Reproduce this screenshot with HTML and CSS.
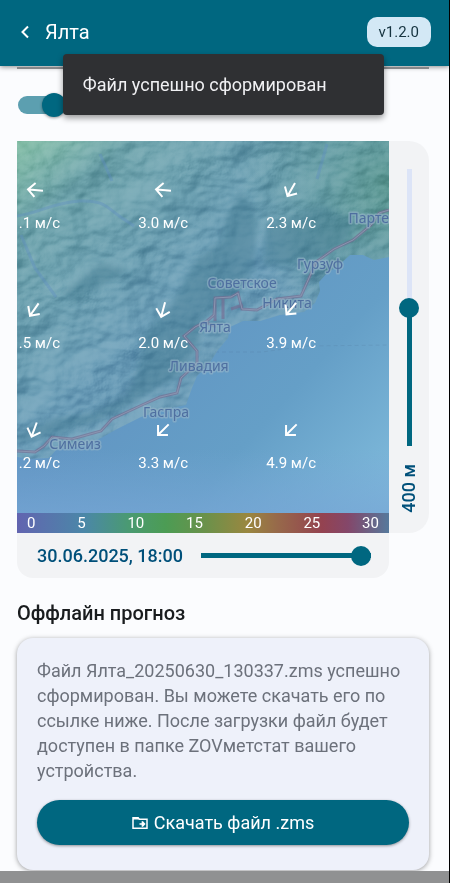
FILE: index.html
```html
<!DOCTYPE html>
<html lang="ru">
<head>
<meta charset="utf-8">
<meta name="viewport" content="width=device-width, initial-scale=1">
<title>Ялта</title>
<link rel="stylesheet" href="styles.css">
</head>
<body>
<header class="topbar">
  <button class="back" type="button" aria-label="Назад">
    <svg width="10" height="14" viewBox="0 0 10 14" fill="none" stroke="currentColor" stroke-width="2"><path d="M8 1.500L2.500 7L8 12.500"/></svg>
  </button>
  <h1 class="title">Ялта</h1>
  <span class="version">v1.2.0</span>
</header>
<div class="toast" role="status">Файл успешно сформирован</div>

<main class="content">
  <hr class="divider">
  <div class="option"><input class="switch" type="checkbox" role="switch" aria-label="Ветер" checked></div>

  <section class="forecast" aria-label="Карта ветра">
    <div class="map">
      <svg class="canvas" viewBox="0 0 372 372" preserveAspectRatio="xMidYMid slice">
        <defs>
          <linearGradient id="land" x1="0" y1="0" x2=".8" y2="1">
            <stop offset="0" stop-color="#84bea6"/><stop offset=".15" stop-color="#6fa4ac"/><stop offset=".5" stop-color="#6b9db8"/><stop offset="1" stop-color="#6897b2"/>
          </linearGradient>
          <radialGradient id="corner" cx="1" cy=".12" r=".4">
            <stop offset="0" stop-color="#5c9a8c" stop-opacity=".8"/><stop offset="1" stop-color="#5c9a8c" stop-opacity="0"/>
          </radialGradient>
          <linearGradient id="sea" gradientUnits="userSpaceOnUse" x1="130" y1="200" x2="340" y2="390">
            <stop offset="0" stop-color="#6296c3"/><stop offset=".5" stop-color="#659fc7"/><stop offset="1" stop-color="#7fbadb"/>
          </linearGradient>
          <linearGradient id="shallow" x1="0" y1="0" x2="0" y2="1">
            <stop offset=".75" stop-color="#76a5d5" stop-opacity="0"/><stop offset="1" stop-color="#76a5d5" stop-opacity=".7"/>
          </linearGradient>
          <filter id="relief" x="0" y="0" width="100%" height="100%" color-interpolation-filters="sRGB">
            <feTurbulence type="fractalNoise" baseFrequency=".016 .022" numOctaves="4" seed="12" result="n"/>
            <feColorMatrix in="n" type="matrix" values="0 0 0 0 0 0 0 0 0 0 0 0 0 0 0 1 0 0 0 0" result="h"/>
            <feDiffuseLighting in="h" surfaceScale="12" diffuseConstant=".76" lighting-color="#fff">
              <feDistantLight azimuth="225" elevation="45"/>
            </feDiffuseLighting>
          </filter>
          <filter id="soft"><feGaussianBlur stdDeviation="3"/></filter>
          <g id="wind" fill="none" stroke="#fff" stroke-width="2"><path d="M8 0H-6M0-7L-7 0L0 7"/></g>
        </defs>
        <rect width="372" height="372" fill="url(#land)"/>
        <rect width="372" height="372" fill="url(#corner)"/>
        <rect class="relief" width="372" height="372" filter="url(#relief)"/>
        <g class="ridges" filter="url(#soft)">
          <path d="M0 294L35 278L76 272L110 255L120 230L128 192L155 162L180 118L205 100L208 80L225 50L240 80L238 125L220 155L188 176L179 210L159 236L120 259L76 282L0 302Z"/>
          <path d="M250 85L305 65L340 80L325 105L285 123L245 125Z"/>
          <path d="M45 153L85 122L112 130L83 145L58 162Z"/>
        </g>
        <path class="stream" d="M0 75C25 71 38 61 63 60S90 67 105 77L117 85M4 94L18 127L39 156M83 13L95 40M310 3L300 38"/>
        <path fill="url(#sea)" d="M0 316L12 318L32 317L40 308L65 305L84 297L100 288L124 276L150 268L169 264L175 247L180 235L192 223L201 209L211 197L213 186L226 180L243 180L263 174L287 171L298 162L303 150L302 141L310 132L321 125L333 114L346 114L357 119L372 116V372H0Z"/>
        <path fill="url(#shallow)" d="M0 316L32 317L84 297L169 264L213 186L287 171L333 114L372 116V372H0Z"/>
        <path class="border" d="M198 211L245 211L290 205L372 204"/>
        <path class="road-edge" d="M0 310L18 311L27 305L35 296L55 298L84 290L95 278L125 264L143 256L160 252L164 237L180 222L180 210L167 195L178 186L190 180L197 174L198 157L214 156L221 152L225 168L240 169L260 158L284 155L292 137L299 121L317 108L336 99L354 84L362 72L372 69M198 159V180M206 158V178M188 181L199 186M214 168L226 164"/>
        <path class="road" d="M0 310L18 311L27 305L35 296L55 298L84 290L95 278L125 264L143 256L160 252L164 237L180 222L180 210L167 195L178 186L190 180L197 174L198 157L214 156L221 152L225 168L240 169L260 158L284 155L292 137L299 121L317 108L336 99L354 84L362 72L372 69"/>
        <g class="place" text-anchor="middle">
          <text x="225" y="147">Советское</text>
          <text x="303" y="128">Гурзуф</text>
          <text x="270" y="167">Никита</text>
          <text x="198" y="191">Ялта</text>
          <text x="182" y="230">Ливадия</text>
          <text x="149" y="276">Гаспра</text>
          <text x="58" y="308">Симеиз</text>
          <text x="372" y="82" text-anchor="end">Парте</text>
        </g>
        <use href="#wind" transform="translate(18 49) rotate(5)"/>
        <use href="#wind" transform="translate(146 49) rotate(5)"/>
        <use href="#wind" transform="translate(274 49) rotate(-60)"/>
        <use href="#wind" transform="translate(17 169) rotate(-55)"/>
        <use href="#wind" transform="translate(146 169) rotate(-75)"/>
        <use href="#wind" transform="translate(274 168) rotate(-50)"/>
        <use href="#wind" transform="translate(17 289) rotate(-70)"/>
        <use href="#wind" transform="translate(146 289) rotate(-45)"/>
        <use href="#wind" transform="translate(274 289) rotate(-45)"/>
        <g class="speed" text-anchor="end">
          <text x="43" y="87">.1 м/с</text><text x="171" y="87">3.0 м/с</text><text x="299" y="87">2.3 м/с</text>
          <text x="43" y="207">.5 м/с</text><text x="171" y="207">2.0 м/с</text><text x="299" y="207">3.9 м/с</text>
          <text x="43" y="327">.2 м/с</text><text x="171" y="327">3.3 м/с</text><text x="299" y="327">4.9 м/с</text>
        </g>
      </svg>
      <div class="legend"><span>0</span><span>5</span><span>10</span><span>15</span><span>20</span><span>25</span><span>30</span></div>
    </div>
    <div class="height">
      <input class="slider upright" id="height" type="range" min="0" max="800" value="400">
      <label class="value vertical" for="height">400 м</label>
    </div>
    <div class="time">
      <label class="value" for="time">30.06.2025, 18:00</label>
      <input class="slider" id="time" type="range" min="0" max="24" value="24">
    </div>
  </section>

  <h2 class="heading">Оффлайн прогноз</h2>
  <section class="card">
    <p class="message">Файл Ялта_20250630_130337.zms успешно сформирован. Вы можете скачать его по ссылке ниже. После загрузки файл будет доступен в папке ZOVметстат вашего устройства.</p>
    <button class="download" type="button">
      <svg width="16" height="14" viewBox="0 0 16 14" fill="none" stroke="currentColor"><path stroke-width="1.500" d="M1 1.700H6L7.500 3.200H15V12.300H1Z"/><path stroke-width="2" d="M1 2.500H7"/><path stroke-width="1.300" d="M7.500 8H12.500M10.300 5.300V10.700M10.300 5.500L12.700 8L10.300 10.500"/></svg>
      Скачать файл .zms
    </button>
  </section>
</main>
<div class="navbar"></div>
</body>
</html>
```
FILE: styles.css
```css
* { box-sizing: border-box; }

body {
  margin: 0;
  min-height: 100vh;
  display: flex;
  flex-direction: column;
  position: relative;
  border-right: 1px solid #000;
  background: #fbfcfe;
  color: #191c1e;
  font-family: Roboto, "Noto Sans", sans-serif;
}

button { border: 0; padding: 0; font: inherit; }

.topbar {
  display: flex;
  align-items: center;
  height: 66px;
  padding: 0 18px 2px 20px;
  background: #006780;
  color: #fff;
  box-shadow: 0 1px 5px rgba(0, 0, 0, .45);
}
.back {
  display: flex;
  width: 25px;
  background: none;
  color: inherit;
}
.title { margin: 0; flex: 1; font-size: 20px; font-weight: 400; }
.version {
  padding: 0 12px;
  border-radius: 10px;
  background: #d3e8f5;
  color: #15333f;
  font-size: 15px;
  line-height: 30px;
}

.toast {
  position: absolute;
  top: 54px;
  left: 14%;
  right: 65px;
  padding: 0 20px;
  border-radius: 4px;
  background: #2f3033;
  color: #f0f0f3;
  font-size: 18px;
  line-height: 61px;
  box-shadow: 0 3px 6px rgba(0, 0, 0, .4);
}

.content { flex: 1; padding: 1px 20px 0 17px; }
.divider { height: 2px; margin: 0; border: 0; background: #85878a; }
.option { display: flex; align-items: center; height: 72px; }
.switch {
  appearance: none;
  display: flex;
  align-items: center;
  justify-content: flex-end;
  width: 48px;
  height: 18px;
  margin: 0 0 0 1px;
  border-radius: 9px;
  background: #5c9fb0;
}
.switch::before {
  content: "";
  width: 24px;
  height: 24px;
  border-radius: 50%;
  background: #006780;
  box-shadow: 0 1px 3px rgba(0, 0, 0, .4);
}

.forecast {
  display: grid;
  grid-template-columns: 1fr 40px;
}
.map { min-width: 0; }
.canvas { display: block; width: 100%; }
.relief { mix-blend-mode: soft-light; opacity: .6; }
.ridges { fill: #377187; opacity: .4; }
.stream { fill: none; stroke: #608fc0; stroke-width: 3; opacity: .4; }
.border { fill: none; stroke: #527d9f; stroke-dasharray: 4 3; opacity: .25; }
.road-edge { fill: none; stroke: #77698f; stroke-width: 3; opacity: .6; }
.road { fill: none; stroke: #8b94af; stroke-width: 1; }
.place {
  fill: #4f6fa0;
  stroke: #94b4c8;
  stroke-opacity: .6;
  stroke-width: 3;
  stroke-linejoin: round;
  paint-order: stroke;
  font: 14px "Noto Sans", sans-serif;
}
.speed { fill: #fff; font-size: 15px; }
.legend {
  display: flex;
  justify-content: space-between;
  padding: 0 10px;
  background: linear-gradient(90deg, #6264b0, #4b87a8 18%, #4a9a72 30%, #4c9c54 40%, #6c914a 51%, #9a8740 62%, #97694a 70%, #944250 82%, #84476a 89%, #56799c);
  color: #fff;
  font-size: 15px;
  line-height: 20px;
}
.height {
  display: flex;
  flex-direction: column;
  align-items: center;
  gap: 18px;
  padding: 28px 0 20px;
  border-radius: 0 20px 20px 0;
  background: #f2f3f5;
}
.time {
  display: flex;
  align-items: center;
  gap: 18px;
  height: 45px;
  padding: 0 18px 0 20px;
  border-radius: 0 0 16px 16px;
  background: #f2f3f5;
}
.value { color: #00507a; font-size: 18px; font-weight: 500; line-height: 20px; }
.vertical { writing-mode: vertical-rl; rotate: 180deg; }

.slider {
  appearance: none;
  flex: 1;
  min-width: 0;
  height: 20px;
  margin: 0;
  background: linear-gradient(#006780, #006780) center / 100% 5px no-repeat;
}
.slider::-webkit-slider-thumb {
  appearance: none;
  width: 20px;
  height: 20px;
  border-radius: 50%;
  background: #006780;
}
.upright {
  writing-mode: vertical-lr;
  direction: rtl;
  width: 20px;
  height: auto;
  min-height: 0;
  background: linear-gradient(#dce4f7 50%, #006780 50%) center / 5px 100% no-repeat;
}

.heading { margin: 23px 0 12px; font-size: 20px; font-weight: 500; line-height: 25px; }
.card {
  padding: 20px 20px 25px;
  border-radius: 16px;
  background: #eef1fa;
  box-shadow: 0 1px 5px rgba(0, 0, 0, .38);
}
.message { margin: 0 0 17px; color: #6c717b; font-size: 18px; line-height: 25px; }
.download {
  display: flex;
  align-items: center;
  justify-content: center;
  gap: 6px;
  width: 100%;
  height: 45px;
  border-radius: 23px;
  background: #006780;
  color: #fff;
  font-size: 18px;
  box-shadow: 0 1px 3px rgba(0, 0, 0, .4);
}
.navbar { height: 12px; background: #909192; position: relative; }
```
